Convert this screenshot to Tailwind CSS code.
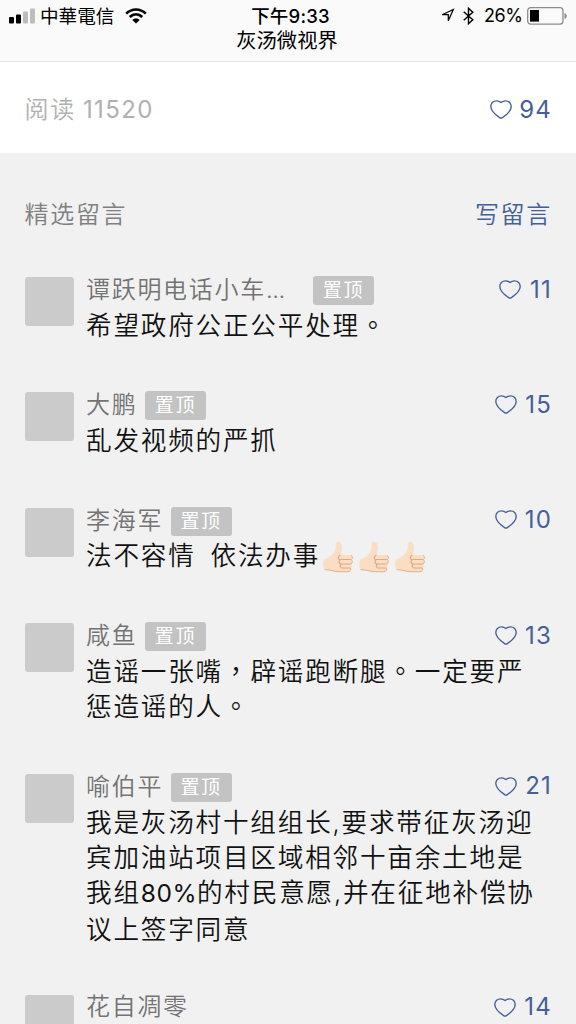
<!DOCTYPE html>
<html lang="zh-CN">
<head>
<meta charset="utf-8">
<title>灰汤微视界</title>
<script src="https://cdn.jsdelivr.net/npm/@tailwindcss/browser@4"></script>
</head>
<body class="w-[576px] h-[1024px] overflow-hidden bg-[#f1f1f1] font-['Inter','Noto_Sans_CJK_SC',sans-serif] font-[350] text-[24px] tracking-[1.7px] whitespace-nowrap">
<svg class="hidden">
  <symbol id="heart" viewBox="0 0 22 19"><path d="M11 2.500C10 1.600 8.500.8 6.500.8 3.100.8.8 3.300.8 6.500.8 11 5 14.500 9.600 17.600 10.600 18.300 11.400 18.300 12.400 17.600 17 14.500 21.200 11 21.200 6.500 21.200 3.300 18.900.8 15.500.8 13.500.8 12 1.600 11 2.500Z" fill="none" stroke="#455f98" stroke-width="1.350" stroke-linejoin="round"/></symbol>
  <symbol id="thumb" viewBox="0 0 30 32">
    <path d="M1 18.500C4 17.500 8 15.500 10.500 12.500 12.500 9.500 13 6 12.500 2.500 13 .3 16.800.2 18.300 3 19.800 6 19 10 17.500 14L27 14C30 14.300 30.300 17.800 28.300 18.500 30.300 19.700 29.500 22.500 28 23 29.500 24.200 28.800 26.700 27.500 27 28.500 29 27 31 24.500 31L17 31C11 31 8 29 1.500 28.800 0 25.500 0 21.500 1 18.500Z" fill="#f9dec3"/>
    <path d="M17.500 14C15 15.300 14.500 17.300 16.500 18.500L28.300 18.500M17 18.600C15.500 20.200 15.700 22.200 17.500 23L28 23M18 23.100C17 24.600 17 26.200 18.500 27L27.500 27" fill="none" stroke="#dfa983" stroke-width="1.200"/>
    <path d="M1.500 28.600C8 28.800 11 30.700 17 30.700L24.500 30.700C27 30.700 28.300 29 27.500 27M28.300 18.500C30 17.600 29.800 15 28 14.300M28 23C29.500 22.200 29.800 19.800 28.300 18.500" fill="none" stroke="#e5b08a" stroke-width="1"/>
  </symbol>
</svg>

<header class="relative h-[62px] bg-[#fafafa] border-b border-[#e4e4e4] text-black font-normal tracking-normal">
  <div class="flex items-center justify-between h-[31px] pl-[9px] pr-[9px]">
    <div class="flex items-center">
      <svg class="w-[26px] h-[16px]" viewBox="0 0 26 16"><rect y="9" width="5" height="6.500" rx="1"/><rect x="7" y="6.500" width="5" height="9" rx="1"/><rect x="14" y="3.500" width="5" height="12" rx="1" fill="#bdbdbd"/><rect x="21" y=".5" width="5" height="15" rx="1" fill="#bdbdbd"/></svg>
      <span class="ml-[5px] text-[18.600px] leading-[30px]">中華電信</span>
      <svg class="ml-[11px] w-[22px] h-[16px]" viewBox="0 0 22 16"><path d="M1.200 5.600C6.700.1 15.300.1 20.800 5.600M4.700 9C8.500 5.400 13.500 5.400 17.300 9" fill="none" stroke="#000" stroke-width="2.700"/><path d="M11 15.500 7.300 11.900C9.300 10.100 12.700 10.100 14.700 11.900Z"/></svg>
    </div>
    <div class="flex items-center">
      <svg class="w-[15px] h-[15px]" viewBox="0 0 15 15"><path d="M2.200 6.700 13.300 1.500 8.300 12.800V6.700Z" fill="none" stroke="#000" stroke-width="1.250"/></svg>
      <svg class="ml-[8px] w-[11px] h-[18px]" viewBox="0 0 11 18"><path d="M.7 4.800 9.800 12.700 5.500 16.700V1.300L9.800 5.300.7 13.200" fill="none" stroke="#000" stroke-width="1.400"/></svg>
      <span class="ml-[10px] w-[38px] text-[18px] leading-[30px] font-['Inter'] tracking-[-0.4px]">26%</span>
      <svg class="ml-[5px] w-[40px] h-[18px]" viewBox="0 0 40 18"><rect x=".7" y=".7" width="35.300" height="16.400" rx="3" fill="none" stroke="#8d8d8d" stroke-width="1.300"/><rect x="3" y="3" width="9" height="11.600"/><path d="M37.500 6C40.500 7 40.500 11 37.500 12Z" fill="#8d8d8d"/></svg>
    </div>
  </div>
  <div class="absolute inset-x-0 top-[1px] flex flex-col items-center">
    <div class="h-[28px] leading-[31px] text-[18.500px] font-medium tracking-[0.2px] pl-[5px]">下午9:33</div>
    <div class="h-[25px] leading-[24px] text-[20.300px] pr-[2px]">灰汤微视界</div>
  </div>
</header>

<section class="flex items-center justify-between h-[91px] bg-white pt-[3px] pl-[24.500px] pr-[24px]">
  <div class="flex gap-[7px] pt-px text-[#b0b0b0] leading-[34px]"><span>阅读</span><span class="font-normal tracking-[1.400px]">11520</span></div>
  <div class="flex items-center text-[#455f98]"><svg class="w-[22px] h-[19px]"><use href="#heart"/></svg><span class="w-[40px] pt-px text-right leading-[34px] font-normal tracking-[1.200px]">94</span></div>
</section>

<main class="pl-[24.500px] pr-[24px]">
  <div class="flex items-center justify-between h-[120px] pt-[3px]">
    <span class="text-[#808080]">精选留言</span><span class="text-[#455f98]">写留言</span>
  </div>

  <article class="flex pt-[4px] pb-[45.700px]">
    <div class="w-[49px] h-[49px] shrink-0 rounded-[3px] bg-[#cbcbcb]"></div>
    <div class="flex-1 ml-[12.500px]">
      <div class="flex justify-between h-[30.500px]">
        <div class="flex gap-[8px]"><span class="w-[219px] leading-[26px] text-[#737373]">谭跃明电话小车<span class="tracking-[-0.5px]">...</span></span><span class="-mt-[1px] w-[61px] h-[29px] rounded-[3px] bg-[#c3c3c3] text-white font-normal text-[19px] leading-[30px] text-center">置顶</span></div>
        <div class="flex items-center h-[24px] text-[#455f98]"><svg class="w-[22px] h-[19px]"><use href="#heart"/></svg><span class="w-[31px] pt-px text-right font-normal tracking-[1.200px]">11</span></div>
      </div>
      <div class="h-[35.300px] text-[25.600px] leading-[35.300px] tracking-[1.800px] text-[#111]">希望政府公正公平处理<span lang="zh-TW" class="leading-none font-['Noto_Sans_CJK_TC']">。</span></div>
    </div>
  </article>

  <article class="flex pt-[4px] pb-[45.700px]">
    <div class="w-[49px] h-[49px] shrink-0 rounded-[3px] bg-[#cbcbcb]"></div>
    <div class="flex-1 ml-[12.500px]">
      <div class="flex justify-between h-[30.500px]">
        <div class="flex gap-[7.500px]"><span class="leading-[26px] text-[#737373]">大鹏</span><span class="-mt-[1px] w-[61px] h-[29px] rounded-[3px] bg-[#c3c3c3] text-white font-normal text-[19px] leading-[30px] text-center">置顶</span></div>
        <div class="flex items-center h-[24px] text-[#455f98]"><svg class="w-[22px] h-[19px]"><use href="#heart"/></svg><span class="w-[35px] pt-px text-right font-normal tracking-[1.200px]">15</span></div>
      </div>
      <div class="h-[35.300px] text-[25.600px] leading-[35.300px] tracking-[1.800px] text-[#111]">乱发视频的严抓</div>
    </div>
  </article>

  <article class="flex pt-[4px] pb-[45.700px]">
    <div class="w-[49px] h-[49px] shrink-0 rounded-[3px] bg-[#cbcbcb]"></div>
    <div class="flex-1 ml-[12.500px]">
      <div class="flex justify-between h-[30.500px]">
        <div class="flex gap-[7.500px]"><span class="leading-[26px] text-[#737373]">李海军</span><span class="-mt-[1px] w-[61px] h-[29px] rounded-[3px] bg-[#c3c3c3] text-white font-normal text-[19px] leading-[30px] text-center">置顶</span></div>
        <div class="flex items-center h-[24px] text-[#455f98]"><svg class="w-[22px] h-[19px]"><use href="#heart"/></svg><span class="w-[35px] pt-px text-right font-normal tracking-[1.200px]">10</span></div>
      </div>
      <div class="flex items-center h-[35.300px] text-[25.600px] leading-[35.300px] tracking-[1.800px] text-[#111]"><span>法不容情</span><span class="ml-[15px]">依法办事</span><span class="flex gap-[6px] ml-[3px] pt-[2px]"><svg class="w-[30px] h-[32px]"><use href="#thumb"/></svg><svg class="w-[30px] h-[32px]"><use href="#thumb"/></svg><svg class="w-[30px] h-[32px]"><use href="#thumb"/></svg></span></div>
    </div>
  </article>

  <article class="flex pt-[4px] pb-[45.700px]">
    <div class="w-[49px] h-[49px] shrink-0 rounded-[3px] bg-[#cbcbcb]"></div>
    <div class="flex-1 ml-[12.500px]">
      <div class="flex justify-between h-[30.500px]">
        <div class="flex gap-[7.500px]"><span class="leading-[26px] text-[#737373]">咸鱼</span><span class="-mt-[1px] w-[61px] h-[29px] rounded-[3px] bg-[#c3c3c3] text-white font-normal text-[19px] leading-[30px] text-center">置顶</span></div>
        <div class="flex items-center h-[24px] text-[#455f98]"><svg class="w-[22px] h-[19px]"><use href="#heart"/></svg><span class="w-[35px] pt-px text-right font-normal tracking-[1.200px]">13</span></div>
      </div>
      <div class="h-[70.600px] text-[25.600px] leading-[35.300px] tracking-[1.800px] text-[#111]">造谣一张嘴<span lang="zh-TW" class="leading-none font-['Noto_Sans_CJK_TC']">，</span>辟谣跑断腿<span lang="zh-TW" class="leading-none font-['Noto_Sans_CJK_TC']">。</span>一定要严<br>惩造谣的人<span lang="zh-TW" class="leading-none font-['Noto_Sans_CJK_TC']">。</span></div>
    </div>
  </article>

  <article class="flex pt-[4px] pb-[45.200px]">
    <div class="w-[49px] h-[49px] shrink-0 rounded-[3px] bg-[#cbcbcb]"></div>
    <div class="flex-1 ml-[12.500px]">
      <div class="flex justify-between h-[30.500px]">
        <div class="flex gap-[7.500px]"><span class="leading-[25px] text-[#737373]">喻伯平</span><span class="-mt-[1px] w-[61px] h-[29px] rounded-[3px] bg-[#c3c3c3] text-white font-normal text-[19px] leading-[30px] text-center">置顶</span></div>
        <div class="flex items-center h-[24px] text-[#455f98]"><svg class="w-[22px] h-[19px]"><use href="#heart"/></svg><span class="w-[35px] text-right font-normal tracking-[1.200px]">21</span></div>
      </div>
      <div class="h-[141.200px] text-[25.600px] leading-[35.300px] tracking-[1.800px] text-[#111]">我是灰汤村十组组长,要求带征灰汤迎<br>宾加油站项目区域相邻十亩余土地是<br>我组<span class="text-[24.500px] tracking-[0.500px] font-normal">80%</span>的村民意愿,并在征地补偿协<br>议上签字同意</div>
    </div>
  </article>

  <article class="flex pt-[4px]">
    <div class="w-[49px] h-[49px] shrink-0 rounded-[3px] bg-[#cbcbcb]"></div>
    <div class="flex-1 ml-[12.500px]">
      <div class="flex justify-between h-[29px]">
        <span class="leading-[24px] text-[#737373]">花自凋零</span>
        <div class="flex items-center h-[24px] text-[#455f98]"><svg class="w-[22px] h-[19px]"><use href="#heart"/></svg><span class="w-[36px] text-right font-normal tracking-[1.200px]">14</span></div>
      </div>
    </div>
  </article>
</main>
</body>
</html>
